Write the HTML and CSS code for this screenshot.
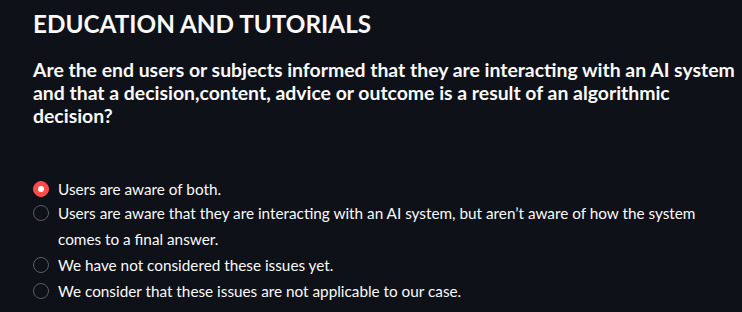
FILE: index.html
```html
<!DOCTYPE html>
<html lang="en">
<head>
<meta charset="utf-8">
<link rel="stylesheet" href="styles.css">
</head>
<body>
<main class="page">
  <h2 class="section-title">EDUCATION AND TUTORIALS</h2>
  <p class="question">Are the end users or subjects informed that they are interacting with an AI system and that a decision,content, advice or outcome is a result of an algorithmic decision?</p>
  <div class="radio-group" role="radiogroup">
    <label class="option checked"><span class="dot"></span><span class="label">Users are aware of both.</span></label>
    <label class="option"><span class="dot"></span><span class="label">Users are aware that they are interacting with an AI system, but aren’t aware of how the system comes to a final answer.</span></label>
    <label class="option"><span class="dot"></span><span class="label">We have not considered these issues yet.</span></label>
    <label class="option"><span class="dot"></span><span class="label">We consider that these issues are not applicable to our case.</span></label>
  </div>
</main>
</body>
</html>
```
FILE: styles.css
```css
html, body {
  margin: 0;
  padding: 0;
  background: #0e1117;
  color: #fafafa;
  font-family: Lato, "Noto Sans", sans-serif;
}
.page {
  padding: 8px 0 0 33px;
  width: 709px;
}
.section-title {
  margin: 0;
  font-size: 24.3px;
  font-weight: 700;
  line-height: 32px;
}
.question {
  margin: 18px 0 0 0;
  font-size: 19.4px;
  font-weight: 700;
  line-height: 23px;
}
.radio-group {
  margin-top: 47px;
  display: flex;
  flex-direction: column;
  width: 680px;
}
.option {
  display: flex;
  align-items: flex-start;
  gap: 9px;
  font-size: 15.3px;
  line-height: 26px;
}
.option.checked {
  margin-top: 2px;
  margin-bottom: -2px;
}
.dot {
  flex: none;
  box-sizing: border-box;
  width: 16px;
  height: 16px;
  margin-top: 5px;
  border-radius: 50%;
  border: 1px solid #5a5d66;
  background: #0e1117;
  position: relative;
}
.option.checked .dot {
  background: #ff4b4b;
  border-color: #ff4b4b;
}
.option.checked .dot::after {
  content: "";
  position: absolute;
  left: 4px;
  top: 4px;
  width: 6px;
  height: 6px;
  border-radius: 50%;
  background: #ffffff;
}
```
